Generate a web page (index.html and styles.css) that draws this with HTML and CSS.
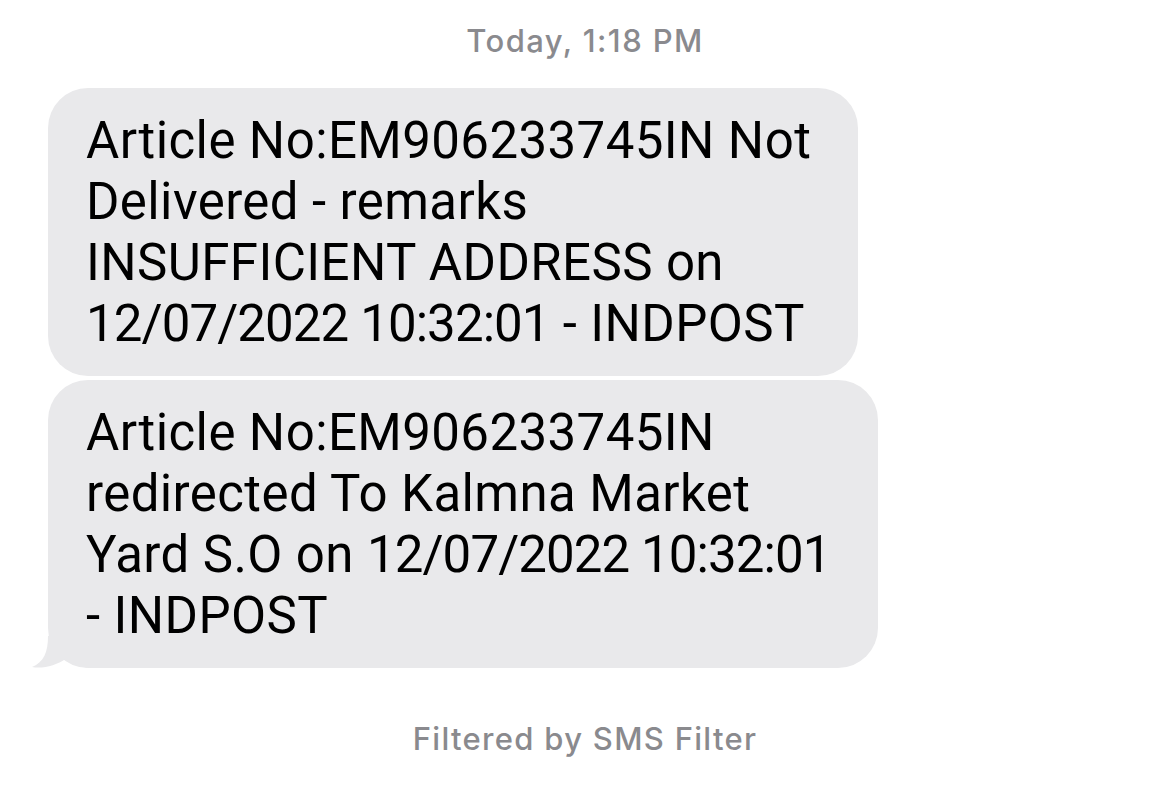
FILE: index.html
```html
<!DOCTYPE html>
<html lang="en">
<head>
<meta charset="utf-8">
<title>Messages</title>
<link rel="stylesheet" href="styles.css">
</head>
<body>
<main class="thread">
  <div class="stamp">Today, 1:18 PM</div>
  <div class="messages">
    <div class="bubble">Article No:EM906233745IN Not<br>Delivered - remarks<br>INSUFFICIENT ADDRESS on<br><span class="dt">12/07/2022 10:32:01</span> - INDPOST</div>
    <div class="bubble bubble-last">Article No:EM906233745IN<br>redirected To Kalmna Market<br>Yard S.O on <span class="dt">12/07/2022 10:32:01</span><br>- INDPOST<svg class="tail" width="60" height="32" viewBox="0 0 60 32" aria-hidden="true"><path d="M16 0 C16 16 12 26 0 31 C10 33 24 30 35 22 C42 28 50 32 60 32 L60 0 Z" fill="#e9e9eb"/></svg></div>
  </div>
  <div class="filter">Filtered by SMS Filter</div>
</main>
</body>
</html>
```
FILE: styles.css
```css
html, body {
  margin: 0;
  padding: 0;
  background: #ffffff;
}
.thread {
  display: flex;
  flex-direction: column;
  width: 1170px;
  height: 787px;
  font-family: Roboto, "Liberation Sans", Arial, sans-serif;
}
.stamp {
  align-self: center;
  margin-top: 22px;
  font-family: Inter, "Liberation Sans", sans-serif;
  font-weight: 500;
  font-size: 31px;
  letter-spacing: 1.4px;
  line-height: 38px;
  color: #8a8a8e;
}
.messages {
  display: flex;
  flex-direction: column;
  align-items: flex-start;
  gap: 4px;
  margin-top: 28px;
  padding-left: 48px;
}
.bubble {
  position: relative;
  background: #e9e9eb;
  border-radius: 40px;
  padding: 22px 47px 22px 38px;
  font-size: 51px;
  line-height: 61px;
  letter-spacing: 0.4px;
  color: #000000;
  white-space: nowrap;
}
.dt {
  letter-spacing: -0.9px;
}
.tail {
  position: absolute;
  left: -16px;
  bottom: 0;
  display: block;
}
.filter {
  align-self: center;
  margin-top: 52px;
  font-family: Inter, "Liberation Sans", sans-serif;
  font-weight: 500;
  font-size: 31px;
  letter-spacing: 1.3px;
  line-height: 38px;
  color: #8a8a8e;
}
```
